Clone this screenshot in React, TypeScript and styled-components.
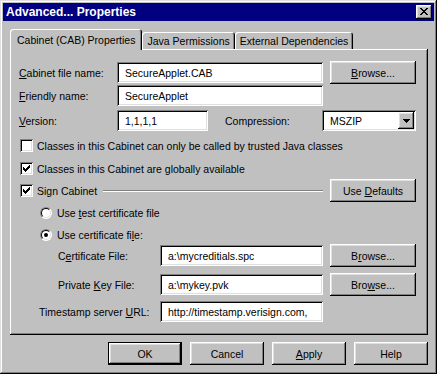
import React from 'react'
import styled, { createGlobalStyle, css } from 'styled-components'

const GlobalStyle = createGlobalStyle`
    html, body {
        margin: 0;
        padding: 0;
        background: #c0c0c0;
    }
    body {
        font-family: 'Liberation Sans', Arial, sans-serif;
        font-size: 10.5px;
        color: #000;
    }
`

const raised = css`
    box-shadow: inset -1px -1px #000, inset 1px 1px #fff, inset -2px -2px #808080, inset 2px 2px #dfdfdf;
`

const sunken = css`
    box-shadow: inset 1px 1px #808080, inset -1px -1px #fff, inset 2px 2px #000, inset -2px -2px #dfdfdf;
`

const Window = styled.div`
    width: 437px;
    height: 374px;
    box-sizing: border-box;
    padding: 3px;
    background: #c0c0c0;
    box-shadow: inset -1px -1px #000, inset 1px 1px #dfdfdf, inset -2px -2px #808080, inset 2px 2px #fff;
    display: flex;
    flex-direction: column;
`

const TitleBar = styled.div`
    height: 18px;
    background: #000080;
    color: #fff;
    font-weight: bold;
    font-size: 12px;
    display: flex;
    align-items: center;
    justify-content: space-between;
    padding: 0 2px 0 3px;
`

const CloseButton = styled.div`
    width: 16px;
    height: 14px;
    background: #c0c0c0;
    display: flex;
    align-items: center;
    justify-content: center;
    ${raised}

    svg {
        margin-top: -1px;
    }
`

const Body = styled.div`
    display: flex;
    flex-direction: column;
    padding: 8px 6px 0 7px;
`

const TabStrip = styled.div`
    display: flex;
    align-items: flex-end;
    height: 20px;
    position: relative;
    z-index: 1;
`

const Tab = styled.div<{ $active?: boolean }>`
    height: ${p => (p.$active ? 21 : 17)}px;
    margin-bottom: ${p => (p.$active ? -1 : 0)}px;
    padding: 0 ${p => (p.$active ? 7 : 5)}px;
    box-sizing: border-box;
    display: flex;
    align-items: center;
    background: #c0c0c0;
    border-radius: 3px 3px 0 0;
    white-space: nowrap;
    box-shadow: inset 1px 1px #fff, inset -1px 0 #000, inset -2px 0 #808080;
`

const Panel = styled.div`
    height: 286px;
    box-sizing: border-box;
    padding: 12px 12px 0 9px;
    display: flex;
    flex-direction: column;
    box-shadow: inset -1px -1px #000, inset 1px 1px #fff, inset -2px -2px #808080;
`

const Row = styled.div<{ $gap?: number; $indent?: number; $short?: boolean }>`
    display: flex;
    align-items: center;
    height: ${p => (p.$short ? 13 : 23)}px;
    margin-top: ${p => p.$gap ?? 0}px;
    padding-left: ${p => p.$indent ?? 0}px;
`

const Text = styled.span`
    white-space: pre;
`

const FieldLabel = styled.span<{ $width: number }>`
    width: ${p => p.$width}px;
    flex: none;
    white-space: pre;
`

const Input = styled.div<{ $width: number }>`
    width: ${p => p.$width}px;
    height: 21px;
    box-sizing: border-box;
    padding: 0 4px 0 8px;
    background: #fff;
    display: flex;
    align-items: center;
    white-space: nowrap;
    overflow: hidden;
    ${sunken}
`

const Select = styled(Input)`
    padding-right: 2px;
    justify-content: space-between;
`

const DropButton = styled.div`
    width: 16px;
    height: 17px;
    background: #c0c0c0;
    display: flex;
    align-items: center;
    justify-content: center;
    ${raised}
`

const Button = styled.div<{ $width?: number; $default?: boolean }>`
    width: ${p => p.$width ?? 86}px;
    height: 23px;
    flex: none;
    box-sizing: border-box;
    display: flex;
    align-items: center;
    justify-content: center;
    white-space: pre;
    background: #c0c0c0;
    ${p =>
        p.$default
            ? css`
                  box-shadow: inset 0 0 0 1px #000, inset -2px -2px #000, inset 2px 2px #fff,
                      inset -3px -3px #808080, inset 3px 3px #dfdfdf;
              `
            : raised}
`

const Spacer = styled.div<{ $width: number }>`
    width: ${p => p.$width}px;
    flex: none;
`

const Key = styled.span`
    text-decoration: underline;
    text-underline-offset: 1px;
`

const CheckBox = styled.div`
    width: 13px;
    height: 13px;
    flex: none;
    margin: 0 4px 0 1px;
    box-sizing: border-box;
    background: #fff;
    display: flex;
    align-items: center;
    justify-content: center;
    ${sunken}
`

const Radio = styled.div<{ $checked?: boolean }>`
    width: 12px;
    height: 12px;
    flex: none;
    margin-right: 5px;
    box-sizing: border-box;
    border-radius: 50%;
    background: #fff;
    border: 1px solid;
    border-color: #808080 #fff #fff #808080;
    position: relative;

    &::before {
        content: '';
        position: absolute;
        inset: 0;
        border-radius: 50%;
        border: 1px solid;
        border-color: #000 #dfdfdf #dfdfdf #000;
    }

    &::after {
        content: '';
        display: ${p => (p.$checked ? 'block' : 'none')};
        position: absolute;
        left: 3px;
        top: 3px;
        width: 4px;
        height: 4px;
        border-radius: 50%;
        background: #000;
    }
`

const Etched = styled.div`
    flex: 1;
    height: 0;
    margin: 0 7px 0 6px;
    border-top: 1px solid #808080;
    border-bottom: 1px solid #fff;
`

const ButtonBar = styled.div`
    display: flex;
    justify-content: flex-end;
    gap: 8px;
    margin-top: 7px;
`

const Check = () => (
    <svg width="7" height="7" viewBox="0 0 7 7" shapeRendering="crispEdges">
        <path d="M0 2h1v3H0z M1 3h1v3H1z M2 4h1v3H2z M3 3h1v3H3z M4 2h1v3H4z M5 1h1v3H5z M6 0h1v3H6z" fill="#000" />
    </svg>
)

const CloseGlyph = () => (
    <svg width="8" height="7" viewBox="0 0 8 7" shapeRendering="crispEdges">
        <path
            d="M0 0h2v1H0z M6 0h2v1H6z M1 1h2v1H1z M5 1h2v1H5z M2 2h4v1H2z M3 3h2v1H3z M2 4h4v1H2z M1 5h2v1H1z M5 5h2v1H5z M0 6h2v1H0z M6 6h2v1H6z"
            fill="#000"
        />
    </svg>
)

const Arrow = () => (
    <svg width="7" height="4" viewBox="0 0 7 4" shapeRendering="crispEdges">
        <path d="M0 0h7v1H0z M1 1h5v1H1z M2 2h3v1H2z M3 3h1v1H3z" fill="#000" />
    </svg>
)

export default function App() {
    return (
        <>
            <GlobalStyle />
            <Window>
                <TitleBar>
                    <span>Advanced... Properties</span>
                    <CloseButton>
                        <CloseGlyph />
                    </CloseButton>
                </TitleBar>

                <Body>
                    <TabStrip>
                        <Tab $active>Cabinet (CAB) Properties</Tab>
                        <Tab>Java Permissions</Tab>
                        <Tab>External Dependencies</Tab>
                    </TabStrip>

                    <Panel>
                        <Row>
                            <FieldLabel $width={98}>
                                <Key>C</Key>abinet file name:
                            </FieldLabel>
                            <Input $width={206}>SecureApplet.CAB</Input>
                            <Spacer $width={7} />
                            <Button>
                                <Text>
                                    <Key>B</Key>rowse...
                                </Text>
                            </Button>
                        </Row>
                        <Row>
                            <FieldLabel $width={98}>
                                <Key>F</Key>riendly name:
                            </FieldLabel>
                            <Input $width={206}>SecureApplet</Input>
                        </Row>
                        <Row $gap={2}>
                            <FieldLabel $width={98}>
                                <Key>V</Key>ersion:
                            </FieldLabel>
                            <Input $width={91}>1,1,1,1</Input>
                            <Spacer $width={17} />
                            <FieldLabel $width={97}>Compression:</FieldLabel>
                            <Select $width={94}>
                                MSZIP
                                <DropButton>
                                    <Arrow />
                                </DropButton>
                            </Select>
                        </Row>

                        <Row $short $gap={7}>
                            <CheckBox />
                            <Text>Classes in this Cabinet can only be called by trusted Java classes</Text>
                        </Row>
                        <Row $short $gap={10}>
                            <CheckBox>
                                <Check />
                            </CheckBox>
                            <Text>Classes in this Cabinet are globally available</Text>
                        </Row>
                        <Row $gap={4}>
                            <CheckBox>
                                <Check />
                            </CheckBox>
                            <Text>Sign Cabinet</Text>
                            <Etched />
                            <Button>
                                <Text>
                                    Use <Key>D</Key>efaults
                                </Text>
                            </Button>
                        </Row>

                        <Row $short $gap={4} $indent={21}>
                            <Radio />
                            <Text>
                                Use <Key>t</Key>est certificate file
                            </Text>
                        </Row>
                        <Row $short $gap={9} $indent={21}>
                            <Radio $checked />
                            <Text>
                                Use certificate fi<Key>l</Key>e:
                            </Text>
                        </Row>

                        <Row $gap={3} $indent={39}>
                            <FieldLabel $width={102}>
                                C<Key>e</Key>rtificate File:
                            </FieldLabel>
                            <Input $width={163}>a:\mycreditials.spc</Input>
                            <Spacer $width={7} />
                            <Button>
                                <Text>
                                    B<Key>r</Key>owse...
                                </Text>
                            </Button>
                        </Row>
                        <Row $gap={6} $indent={39}>
                            <FieldLabel $width={102}>
                                Private <Key>K</Key>ey File:
                            </FieldLabel>
                            <Input $width={163}>a:\mykey.pvk</Input>
                            <Spacer $width={7} />
                            <Button>
                                <Text>
                                    Bro<Key>w</Key>se...
                                </Text>
                            </Button>
                        </Row>
                        <Row $gap={4} $indent={20}>
                            <FieldLabel $width={121}>
                                Timestamp server <Key>U</Key>RL:
                            </FieldLabel>
                            <Input $width={163}>http://timestamp.verisign.com,</Input>
                        </Row>
                    </Panel>

                    <ButtonBar>
                        <Button $width={74} $default>
                            OK
                        </Button>
                        <Button $width={74}>Cancel</Button>
                        <Button $width={74}>
                            <Text>
                                <Key>A</Key>pply
                            </Text>
                        </Button>
                        <Button $width={74}>Help</Button>
                    </ButtonBar>
                </Body>
            </Window>
        </>
    )
}
